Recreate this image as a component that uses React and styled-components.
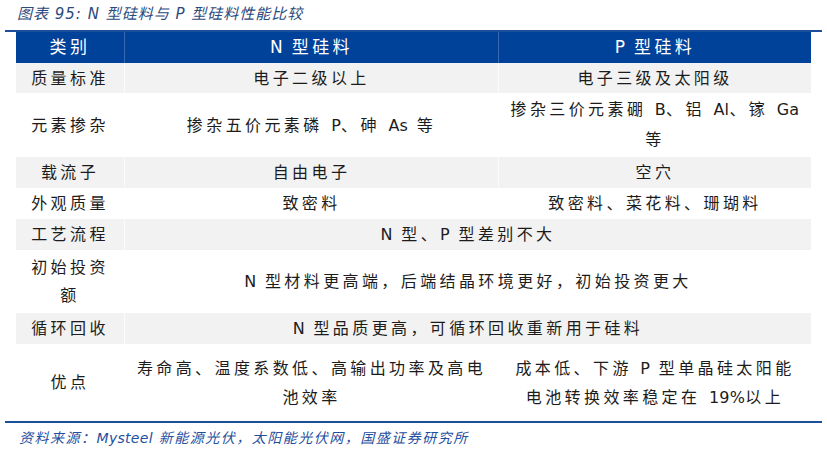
import React from 'react';
import styled, { createGlobalStyle } from 'styled-components';

const colors = {
  blue: '#00419a',
  rule: '#1b4f9c',
  title: '#2c4a7c',
  source: '#1f4fa0',
  shade: '#f2f2f2',
  text: '#1c1c1c',
};

const fontStack = `"DejaVu Sans", "Noto Sans CJK SC", sans-serif`;

const GlobalStyle = createGlobalStyle`
  html, body {
    margin: 0;
    padding: 0;
    background: #ffffff;
  }
  body {
    font-family: ${fontStack};
    color: ${colors.text};
  }
`;

const Page = styled.div`
  width: 827px;
  height: 457px;
  padding: 4px 5px 0;
  box-sizing: border-box;
`;

const Title = styled.div`
  height: 20px;
  line-height: 20px;
  padding-left: 12px;
  font-size: 15px;
  font-style: italic;
  letter-spacing: 1px;
  color: ${colors.title};
  margin-bottom: 6px;
`;

const Frame = styled.div`
  border-top: 2px solid ${colors.rule};
  border-bottom: 2px solid ${colors.rule};
  padding: 0 11px;
`;

const Row = styled.div`
  display: grid;
  grid-template-columns: 108px 374px 313px;
  height: ${(p) => p.$h}px;
  background: ${(p) => (p.$head ? colors.blue : p.$shade ? colors.shade : '#ffffff')};
  color: ${(p) => (p.$head ? '#ffffff' : colors.text)};
  font-size: ${(p) => (p.$head ? 17 : 16)}px;
`;

const Cell = styled.div`
  grid-column: span ${(p) => p.$span || 1};
  display: flex;
  align-items: center;
  justify-content: center;
  text-align: center;
  padding: 0 6px;
  line-height: ${(p) => p.$lh || 29}px;
  letter-spacing: 3.4px;
  border-left: ${(p) => (p.$first ? 'none' : `1px solid ${p.$line || 'rgba(255,255,255,0.7)'}`)};
`;

const Latin = styled.span`
  letter-spacing: 0.3px;
`;

const Source = styled.div`
  padding-left: 14px;
  margin-top: 4px;
  font-size: 14px;
  font-style: italic;
  letter-spacing: 1.5px;
  color: ${colors.source};
`;

const headLine = 'rgba(255,255,255,0.22)';

export default function App() {
  return (
    <>
      <GlobalStyle />
      <Page>
        <Title>图表 95:  N 型硅料与 P 型硅料性能比较</Title>
        <Frame>
          <Row $head $h={31}>
            <Cell $first>类别</Cell>
            <Cell $line={headLine}><span><Latin>N</Latin> 型硅料</span></Cell>
            <Cell $line={headLine}><span><Latin>P</Latin> 型硅料</span></Cell>
          </Row>
          <Row $shade $h={30}>
            <Cell $first>质量标准</Cell>
            <Cell>电子二级以上</Cell>
            <Cell>电子三级及太阳级</Cell>
          </Row>
          <Row $h={64}>
            <Cell $first>元素掺杂</Cell>
            <Cell>
              <span>掺杂五价元素磷 <Latin>P</Latin>、砷 <Latin>As</Latin> 等</span>
            </Cell>
            <Cell $lh={30}>
              <span>掺杂三价元素硼 <Latin>B</Latin>、铝 <Latin>Al</Latin>、镓 <Latin>Ga</Latin><br />等</span>
            </Cell>
          </Row>
          <Row $shade $h={31}>
            <Cell $first>载流子</Cell>
            <Cell>自由电子</Cell>
            <Cell>空穴</Cell>
          </Row>
          <Row $h={31}>
            <Cell $first>外观质量</Cell>
            <Cell>致密料</Cell>
            <Cell>致密料、菜花料、珊瑚料</Cell>
          </Row>
          <Row $shade $h={31}>
            <Cell $first>工艺流程</Cell>
            <Cell $span={2}><span><Latin>N</Latin> 型、<Latin>P</Latin> 型差别不大</span></Cell>
          </Row>
          <Row $h={63}>
            <Cell $first $lh={28}><span>初始投资<br />额</span></Cell>
            <Cell $span={2}>
              <span><Latin>N</Latin> 型材料更高端，后端结晶环境更好，初始投资更大</span>
            </Cell>
          </Row>
          <Row $shade $h={31}>
            <Cell $first>循环回收</Cell>
            <Cell $span={2}>
              <span><Latin>N</Latin> 型品质更高，可循环回收重新用于硅料</span>
            </Cell>
          </Row>
          <Row $h={77}>
            <Cell $first>优点</Cell>
            <Cell $lh={29}><span>寿命高、温度系数低、高输出功率及高电<br />池效率</span></Cell>
            <Cell $lh={29}>
              <span>成本低、下游 <Latin>P</Latin> 型单晶硅太阳能<br />电池转换效率稳定在 <Latin>19%</Latin>以上</span>
            </Cell>
          </Row>
        </Frame>
        <Source>资料来源：<Latin>Mysteel</Latin> 新能源光伏，太阳能光伏网，国盛证券研究所</Source>
      </Page>
    </>
  );
}
